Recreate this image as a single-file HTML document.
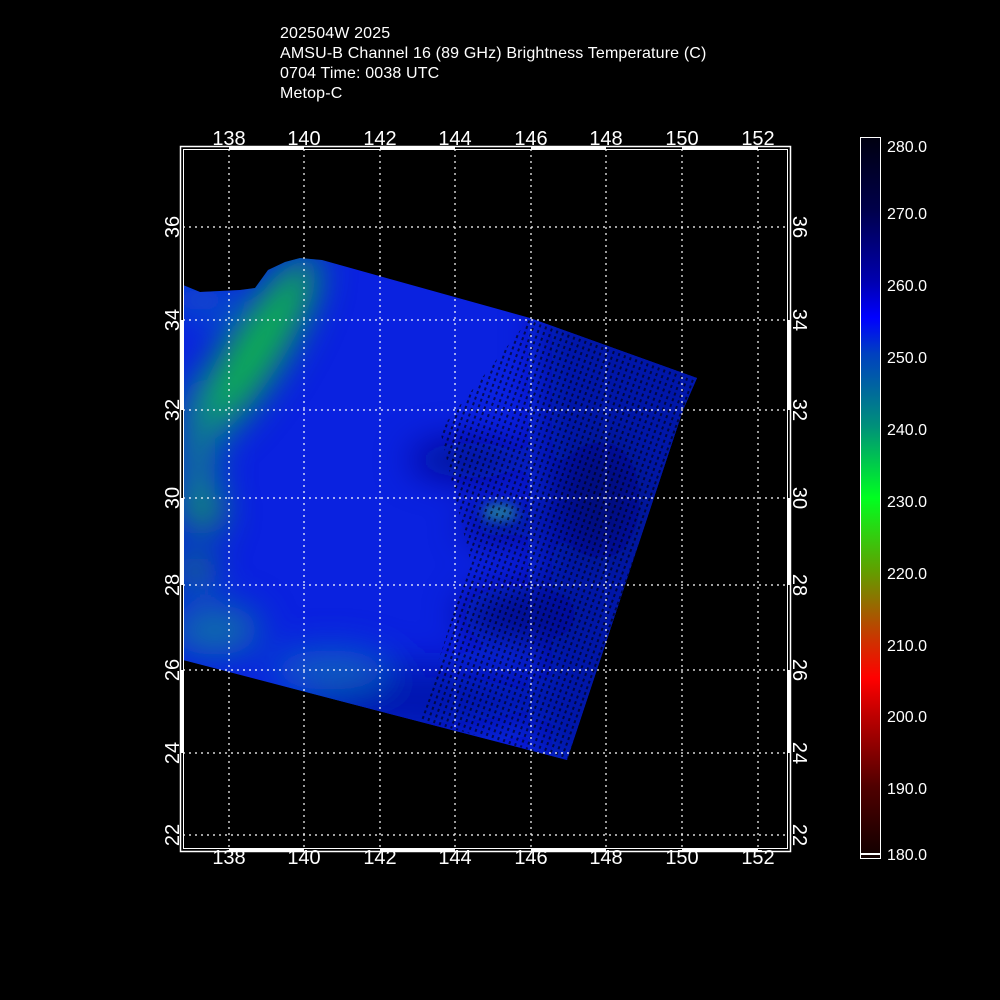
<!DOCTYPE html>
<html><head><meta charset="utf-8"><style>
html,body{margin:0;padding:0;background:#000;}
body{width:1000px;height:1000px;overflow:hidden;position:relative;font-family:"Liberation Sans",sans-serif;}
.t{position:absolute;left:280px;color:#fff;font-size:16px;line-height:20px;top:24px;letter-spacing:0.15px;}
</style></head><body>
<div class="t">202504W 2025<br>AMSU-B Channel 16 (89 GHz) Brightness Temperature (C)<br>0704 Time: 0038 UTC<br>Metop-C</div>
<svg width="1000" height="1000" style="position:absolute;left:0;top:0" xmlns="http://www.w3.org/2000/svg">
<defs>
<filter id="b1" x="-50%" y="-50%" width="200%" height="200%"><feGaussianBlur stdDeviation="18"/></filter>
<filter id="b2" x="-50%" y="-50%" width="200%" height="200%"><feGaussianBlur stdDeviation="6"/></filter>
<clipPath id="sw"><polygon points="183,285 200,292 240,290 255,288 268,270 285,262 300,258 322,260 530,318 697,378 683,410 567,760 183,660"/></clipPath>
<linearGradient id="cb" x1="0" y1="0" x2="0" y2="1">
<stop offset="0" stop-color="#000010"/><stop offset="0.1" stop-color="#00004a"/><stop offset="0.2" stop-color="#0000b0"/><stop offset="0.25" stop-color="#0000ff"/><stop offset="0.3" stop-color="#0040c0"/><stop offset="0.4" stop-color="#00907a"/><stop offset="0.5" stop-color="#00ff20"/><stop offset="0.6" stop-color="#60a000"/><stop offset="0.7" stop-color="#d03000"/><stop offset="0.75" stop-color="#ff0000"/><stop offset="0.8" stop-color="#c00000"/><stop offset="0.9" stop-color="#500000"/><stop offset="1" stop-color="#100000"/>
</linearGradient>
<pattern id="dots" width="6" height="6" patternUnits="userSpaceOnUse" patternTransform="rotate(20)"><rect width="2" height="3" fill="#000" opacity="0.6"/></pattern>
</defs>
<g clip-path="url(#sw)">
<rect x="180" y="250" width="520" height="520" fill="#0a22e0"/>
<g filter="url(#b1)">
<rect x="540" y="300" width="180" height="470" fill="#0016a8"/>
<ellipse cx="430" cy="700" rx="120" ry="35" fill="#0018b0"/>
<ellipse cx="255" cy="350" rx="28" ry="110" fill="#10b050" transform="rotate(32 255 350)"/>
<ellipse cx="200" cy="300" rx="30" ry="15" fill="#1060c0"/>
<ellipse cx="198" cy="450" rx="18" ry="70" fill="#10808a"/>
<ellipse cx="203" cy="512" rx="20" ry="18" fill="#18b040"/>
<ellipse cx="195" cy="570" rx="18" ry="14" fill="#18a048"/>
<ellipse cx="215" cy="630" rx="45" ry="25" fill="#1070a8"/>
<ellipse cx="330" cy="670" rx="60" ry="20" fill="#1060c0"/>
<ellipse cx="500" cy="525" rx="35" ry="15" fill="#000a80"/>
<ellipse cx="470" cy="460" rx="60" ry="18" fill="#000c90"/>
<ellipse cx="600" cy="500" rx="40" ry="60" fill="#000c80"/>
<ellipse cx="520" cy="615" rx="60" ry="28" fill="#000e90"/>
</g>
<ellipse cx="500" cy="512" rx="18" ry="8" fill="#2080a0" filter="url(#b2)"/>
<polygon points="530,318 697,378 683,410 567,760 420,720 470,560 440,430" fill="url(#dots)"/>
</g>
<g stroke="#fff" stroke-width="1.2" stroke-dasharray="2,4" fill="none">
<path d="M229,149V849M304,149V849M380,149V849M455,149V849M531,149V849M606,149V849M682,149V849M758,149V849"/>
<path d="M183,227H788M183,320H788M183,410H788M183,498H788M183,585H788M183,670H788M183,753H788M183,835H788"/>
</g>
<rect x="180.5" y="146.5" width="610" height="705" fill="none" stroke="#fff" stroke-width="1.5"/>
<rect x="183.5" y="149.5" width="604" height="699" fill="none" stroke="#fff" stroke-width="1"/>
<g fill="#fff">
<rect x="229" y="146" width="75" height="4"/><rect x="380" y="146" width="75" height="4"/><rect x="531" y="146" width="75" height="4"/><rect x="682" y="146" width="76" height="4"/>
<rect x="229" y="848" width="75" height="4"/><rect x="380" y="848" width="75" height="4"/><rect x="531" y="848" width="75" height="4"/><rect x="682" y="848" width="76" height="4"/>
<rect x="180" y="320" width="3" height="90"/><rect x="180" y="498" width="3" height="87"/><rect x="180" y="670" width="3" height="83"/>
<rect x="788" y="320" width="3" height="90"/><rect x="788" y="498" width="3" height="87"/><rect x="788" y="670" width="3" height="83"/>
</g>
<g fill="#fff" font-family="Liberation Sans, sans-serif" font-size="20" text-anchor="middle">
<text x="229" y="145">138</text><text x="304" y="145">140</text><text x="380" y="145">142</text><text x="455" y="145">144</text><text x="531" y="145">146</text><text x="606" y="145">148</text><text x="682" y="145">150</text><text x="758" y="145">152</text>
<text x="229" y="864">138</text><text x="304" y="864">140</text><text x="380" y="864">142</text><text x="455" y="864">144</text><text x="531" y="864">146</text><text x="606" y="864">148</text><text x="682" y="864">150</text><text x="758" y="864">152</text>
<g transform="translate(179,227) rotate(-90)"><text>36</text></g>
<g transform="translate(179,320) rotate(-90)"><text>34</text></g>
<g transform="translate(179,410) rotate(-90)"><text>32</text></g>
<g transform="translate(179,498) rotate(-90)"><text>30</text></g>
<g transform="translate(179,585) rotate(-90)"><text>28</text></g>
<g transform="translate(179,670) rotate(-90)"><text>26</text></g>
<g transform="translate(179,753) rotate(-90)"><text>24</text></g>
<g transform="translate(179,835) rotate(-90)"><text>22</text></g>
<g transform="translate(793,227) rotate(90)"><text>36</text></g>
<g transform="translate(793,320) rotate(90)"><text>34</text></g>
<g transform="translate(793,410) rotate(90)"><text>32</text></g>
<g transform="translate(793,498) rotate(90)"><text>30</text></g>
<g transform="translate(793,585) rotate(90)"><text>28</text></g>
<g transform="translate(793,670) rotate(90)"><text>26</text></g>
<g transform="translate(793,753) rotate(90)"><text>24</text></g>
<g transform="translate(793,835) rotate(90)"><text>22</text></g>
</g>
<rect x="860.5" y="137.5" width="20" height="721" fill="url(#cb)" stroke="#fff" stroke-width="1"/>
<rect x="861" y="853" width="19" height="2" fill="#fff"/>
<g fill="#fff" font-family="Liberation Sans, sans-serif" font-size="16">
<text x="887" y="152">280.0</text><text x="887" y="219">270.0</text><text x="887" y="291">260.0</text><text x="887" y="363">250.0</text><text x="887" y="435">240.0</text><text x="887" y="507">230.0</text><text x="887" y="579">220.0</text><text x="887" y="651">210.0</text><text x="887" y="722">200.0</text><text x="887" y="794">190.0</text><text x="887" y="860">180.0</text>
</g>
</svg>
</body></html>
